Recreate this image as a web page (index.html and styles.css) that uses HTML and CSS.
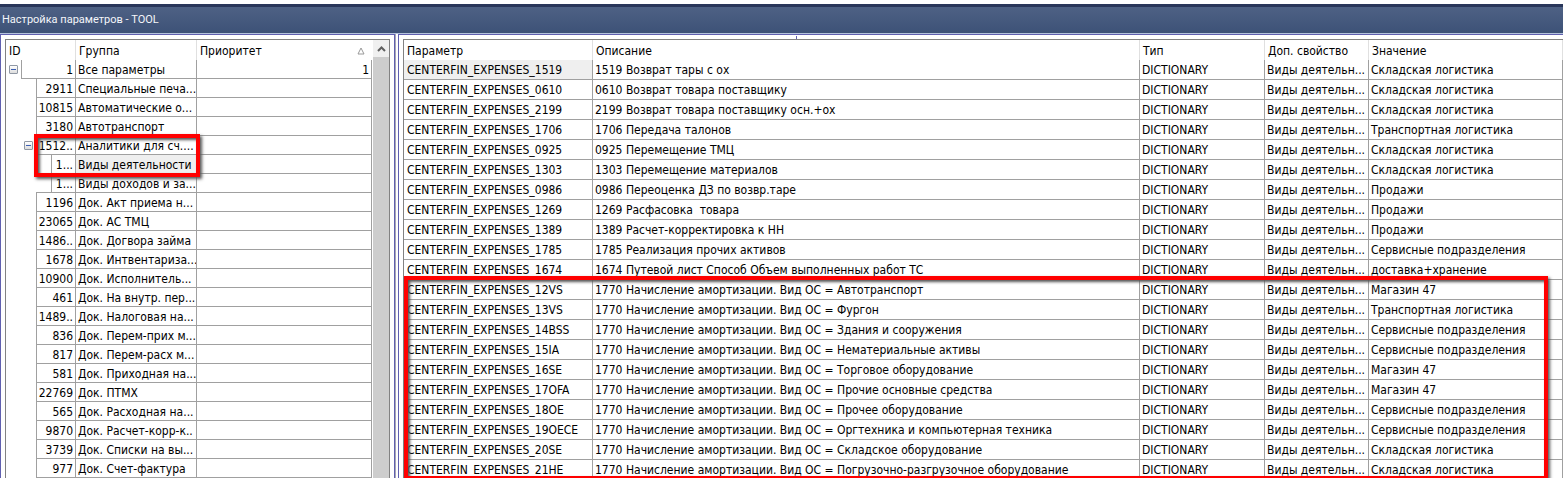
FILE: index.html
```html
<!DOCTYPE html>
<html lang="ru">
<head>
<meta charset="utf-8">
<title>Настройка параметров - TOOL</title>
<link rel="stylesheet" href="styles.css">
</head>
<body>
<div class="window">
  <header class="titlebar">Настройка параметров - TOOL</header>
  <main class="workspace">
    <section class="panel panel-tree">
      <div class="grid tree-grid">
        <table class="tree">
          <colgroup><col class="c-id"><col class="c-group"><col class="c-priority"></colgroup>
          <thead><tr><th>ID</th><th>Группа</th><th><span class="sortable">Приоритет<svg class="sort" viewBox="0 0 8 8"><path d="M4 1 L7 7 H1 Z"/></svg></span></th></tr></thead>
          <tbody id="tree-rows"></tbody>
        </table>
        <div class="scrollbar"><button class="scroll-up" aria-label="Вверх"><svg viewBox="0 0 9 6"><path d="M1 5 L4.5 1.5 L8 5"/></svg></button></div>
      </div>
      <div class="mark mark-tree"></div>
    </section>
    <div class="splitter"></div>
    <section class="panel panel-params">
      <div class="grip"></div>
      <div class="grid">
        <table class="params">
          <colgroup><col class="c-param"><col class="c-desc"><col class="c-type"><col class="c-prop"><col class="c-value"></colgroup>
          <thead><tr><th>Параметр</th><th>Описание</th><th>Тип</th><th>Доп. свойство</th><th>Значение</th></tr></thead>
          <tbody id="param-rows"></tbody>
        </table>
      </div>
      <div class="mark mark-params"></div>
    </section>
  </main>
</div>
<script src="app.js"></script>
</body>
</html>
```
FILE: styles.css
```css
* { box-sizing: border-box; }
body {
  margin: 0;
  height: 100vh;
  overflow: hidden;
  background: #fff;
  color: #000;
  font: 12px/18px "DejaVu Sans Condensed", Tahoma, "Noto Sans", sans-serif;
}
.window { display: flex; flex-direction: column; min-height: 100vh; padding-top: 4px; }
.titlebar {
  height: 30px;
  padding: 4px 2px 0;
  border-top: 3px solid #29365a;
  border-bottom: 1px solid #b4c3dc;
  background: linear-gradient(#4e6184, #3d5277);
  color: #f4f6fa;
  font-family: Roboto, "Noto Sans", sans-serif;
  font-size: 11px;
}
.workspace { display: flex; flex: 1; align-items: stretch; }
.panel { position: relative; border-top: 1px solid #6060b0; padding-top: 4px; }
.panel-tree { width: 395px; padding-left: 4px; padding-right: 4px; border-left: 1px solid #6060b0; border-right: 1px solid #6060b0; }
.splitter { width: 3px; border-left: 1px solid #a9a9b4; }
.panel-params { flex: 1; min-width: 0; padding-left: 4px; border-left: 1px solid #6060b0; }
.grid { border-top: 1px solid #828282; border-left: 1px solid #828282; }
.tree-grid { display: flex; height: 100%; border-right: 1px solid #828282; }
.grip { position: absolute; left: 397px; top: 1px; width: 1px; height: 3px; background: #6060b0; }

table { table-layout: fixed; border-collapse: separate; border-spacing: 0; }
th, td { padding: 0 2px; text-align: left; font-weight: normal; white-space: nowrap; overflow: hidden; border-right: 1px solid #a0a0a0; border-bottom: 1px solid #a0a0a0; }
th { height: 20px; padding: 2px 3px 0; border-bottom: 0; border-right-color: #e0e0e0; }

.tree { width: 366px; align-self: flex-start; }
.c-id { width: 70px; }
.c-group { width: 121px; }
.c-priority { width: 175px; }
.tree td { height: 19px; padding-top: 2px; line-height: 16px; }
.tree th:last-child { border-right-color: #fff; }
.tree td.id { padding: 0; border-bottom: 0; }
.id-row { display: flex; height: 19px; }
.indent { display: flex; justify-content: flex-end; align-items: center; flex: none; }
.level-1 .indent { width: 15px; }
.level-2 .indent { width: 30px; }
.level-3 .indent { width: 45px; }
.last .indent::before { content: ""; align-self: flex-end; width: 15px; height: 1px; background: #a0a0a0; }
.id-value { flex: 1; min-width: 0; padding-top: 2px; padding-right: 2px; text-align: right; border-left: 1px solid #a0a0a0; border-bottom: 1px solid #a0a0a0; }
.number { text-align: right; }
.selected { background: #efefef; }
.toggle { width: 9px; height: 9px; margin-right: 3px; padding: 0; border: 1px solid #9098a4; border-radius: 1px; background: linear-gradient(#fff, #ddd); display: grid; place-items: center; }
.toggle::before { content: ""; width: 5px; height: 1px; background: #3c5fb4; }
.sortable { display: flex; justify-content: space-between; align-items: center; padding-right: 3px; }
.sort { width: 8px; height: 8px; fill: none; stroke: #999; }
.scrollbar { width: 16px; margin-left: 1px; background: #cdcdcd; }
.scroll-up { width: 16px; height: 17px; padding: 0; border: 0; background: #f0f0f0; display: grid; place-items: center; }
.scroll-up svg { width: 9px; height: 6px; fill: none; stroke: #606060; stroke-width: 2; }

.params { width: 100%; }
.c-param { width: 189px; }
.c-type { width: 125px; }
.c-prop { width: 104px; }
.c-value { width: 194px; }
.params td { height: 20px; }
.params td:first-child, .params th:first-child { padding-left: 3px; }

.mark { position: absolute; border: 4px solid #f00; box-shadow: 2px 2px 3px #555, inset 2px 2px 3px #555; pointer-events: none; }
.mark-tree { left: 33px; top: 99px; width: 166px; height: 43px; }
.mark-params { left: 5px; right: 15px; top: 241px; height: 204px; }
```
FILE: app.js
```javascript
const tree = [
  [1, "1", "Все параметры", "1", "open"],
  [2, "2911", "Специальные печа..."],
  [2, "10815", "Автоматические о..."],
  [2, "3180", "Автотранспорт"],
  [2, "1512..", "Аналитики для сч....", "", "open"],
  [3, "1...", "Виды деятельности", "", "selected"],
  [3, "1...", "Виды доходов и за...", "", "last"],
  [2, "1196", "Док. Акт приема н..."],
  [2, "23065", "Док. АС ТМЦ"],
  [2, "1486..", "Док. Догвора займа"],
  [2, "1678", "Док. Интвентариза..."],
  [2, "10900", "Док. Исполнитель..."],
  [2, "461", "Док. На внутр. пер..."],
  [2, "1489..", "Док. Налоговая на..."],
  [2, "836", "Док. Перем-прих м..."],
  [2, "817", "Док. Перем-расх м..."],
  [2, "581", "Док. Приходная на..."],
  [2, "22769", "Док. ПТМХ"],
  [2, "565", "Док. Расходная на..."],
  [2, "9870", "Док. Расчет-корр-к.."],
  [2, "3739", "Док. Списки на вы..."],
  [2, "977", "Док. Счет-фактура"]
];

const stock = "Складская логистика";
const transport = "Транспортная логистика";
const service = "Сервисные подразделения";
const asset = "1770 Начисление амортизации. Вид ОС = ";
const params = [
  ["1519", "1519 Возврат тары с ох", stock],
  ["0610", "0610 Возврат товара поставщику", stock],
  ["2199", "2199 Возврат товара поставщику осн.+ох", stock],
  ["1706", "1706 Передача талонов", transport],
  ["0925", "0925 Перемещение ТМЦ", stock],
  ["1303", "1303 Перемещение материалов", stock],
  ["0986", "0986 Переоценка ДЗ по возвр.таре", "Продажи"],
  ["1269", "1269 Расфасовка\u00a0 товара", "Продажи"],
  ["1389", "1389 Расчет-корректировка к НН", "Продажи"],
  ["1785", "1785 Реализация прочих активов", service],
  ["1674", "1674 Путевой лист Способ Объем выполненных работ ТС", "доставка+хранение"],
  ["12VS", asset + "Автотранспорт", "Магазин 47"],
  ["13VS", asset + "Фургон", transport],
  ["14BSS", asset + "Здания и сооружения", service],
  ["15IA", asset + "Нематериальные активы", service],
  ["16SE", asset + "Торговое оборудование", "Магазин 47"],
  ["17OFA", asset + "Прочие основные средства", "Магазин 47"],
  ["18OE", asset + "Прочее оборудование", service],
  ["19OECE", asset + "Оргтехника и компьютерная техника", service],
  ["20SE", asset + "Складское оборудование", stock],
  ["21HE", asset + "Погрузочно-разгрузочное оборудование", stock]
];

document.getElementById("tree-rows").innerHTML = tree.map(([level, id, name, priority = "", state = ""]) => {
  const toggle = state === "open" ? '<button class="toggle" aria-label="Свернуть"></button>' : "";
  return `<tr class="level-${level}${state === "last" ? " last" : ""}"><td class="id"><div class="id-row"><span class="indent">${toggle}</span><span class="id-value">${id}</span></div></td>` +
    `<td class="${state === "selected" ? "selected" : ""}">${name}</td><td class="number">${priority}</td></tr>`;
}).join("");

document.getElementById("param-rows").innerHTML = params.map(([code, description, value], i) =>
  `<tr><td class="${i === 0 ? "selected" : ""}">CENTERFIN_EXPENSES_${code}</td><td>${description}</td><td>DICTIONARY</td><td>Виды деятельн...</td><td>${value}</td></tr>`
).join("");
```
